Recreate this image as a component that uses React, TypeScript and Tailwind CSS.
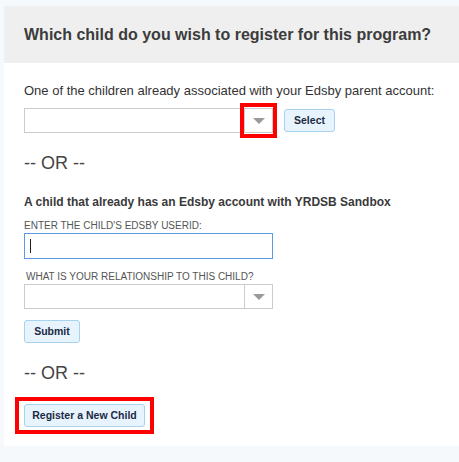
import React from 'react';

const Arrow: React.FC = () => (
  <div className="w-0 h-0 border-l-[6px] border-r-[6px] border-t-[6px] border-l-transparent border-r-transparent border-t-[#9a9a9a]" />
);

const DropDown: React.FC<{ highlight?: boolean }> = ({ highlight }) => (
  <div className="relative flex w-[249px] h-[25px] border border-[#cccccc] bg-white">
    <div className="flex-1" />
    <div className="w-[28px] border-l border-[#cccccc] flex items-center justify-center">
      <Arrow />
    </div>
    {highlight && (
      <div className="absolute left-[215px] top-[-6px] w-[37px] h-[35px] border-4 border-[#ff0000]" />
    )}
  </div>
);

const BlueButton: React.FC<{ label: string; className?: string }> = ({ label, className = '' }) => (
  <button
    className={`block h-[23px] rounded-[3px] border border-[#a8d2f0] bg-[#e8f4fd] text-[10.5px] font-bold text-[#1b2a44] ${className}`}
  >
    {label}
  </button>
);

const OrDivider: React.FC = () => (
  <div className="text-[18px] leading-[20px] text-[#444444]">-- OR --</div>
);

export default function App() {
  return (
    <div className="min-h-[462px] bg-[#f5f9fc] pt-[6px] pl-[4px] pb-[17px]" style={{ fontFamily: '"Liberation Sans", Arial, sans-serif' }}>
      <div className="bg-white">
        <div className="h-[57px] bg-[#efefef] flex items-center pl-[20px]">
          <h1 className="text-[16px] font-bold text-[#3c3c3c] whitespace-nowrap">
            Which child do you wish to register for this program?
          </h1>
        </div>

        <div className="px-[20px] pt-[20px] pb-[19px]">
          <div className="text-[13px] leading-[15px] text-[#333333] whitespace-nowrap">
            One of the children already associated with your Edsby parent account:
          </div>
          <div className="mt-[10px] flex items-center gap-[11px]">
            <DropDown highlight />
            <BlueButton label="Select" className="w-[51px]" />
          </div>

          <div className="mt-[20px]">
            <OrDivider />
          </div>

          <div className="mt-[22px] text-[12px] leading-[15px] font-bold text-[#3a3a3a]">
            A child that already has an Edsby account with YRDSB Sandbox
          </div>
          <div className="mt-[9px] text-[10px] leading-[13px] text-[#555555] uppercase">
            Enter the child's Edsby userid:
          </div>
          <div className="mt-[1px] w-[249px] h-[26px] border border-[#5b9be6] bg-white flex items-center pl-[5px]">
            <div className="w-[1px] h-[14px] bg-[#222222]" />
          </div>
          <div className="mt-[11px] pl-[2px] text-[10px] leading-[13px] text-[#555555] uppercase">
            What is your relationship to this child?
          </div>
          <div className="mt-[1px]">
            <DropDown />
          </div>
          <div className="mt-[11px] flex">
            <BlueButton label="Submit" className="w-[56px]" />
          </div>

          <div className="mt-[20px]">
            <OrDivider />
          </div>

          <div className="mt-[21px] flex">
            <div className="relative">
              <BlueButton label="Register a New Child" className="w-[121px]" />
              <div className="absolute left-[-9px] right-[-9px] top-[-7px] bottom-[-7px] border-4 border-[#ff0000]" />
            </div>
          </div>
        </div>
      </div>
    </div>
  );
}
